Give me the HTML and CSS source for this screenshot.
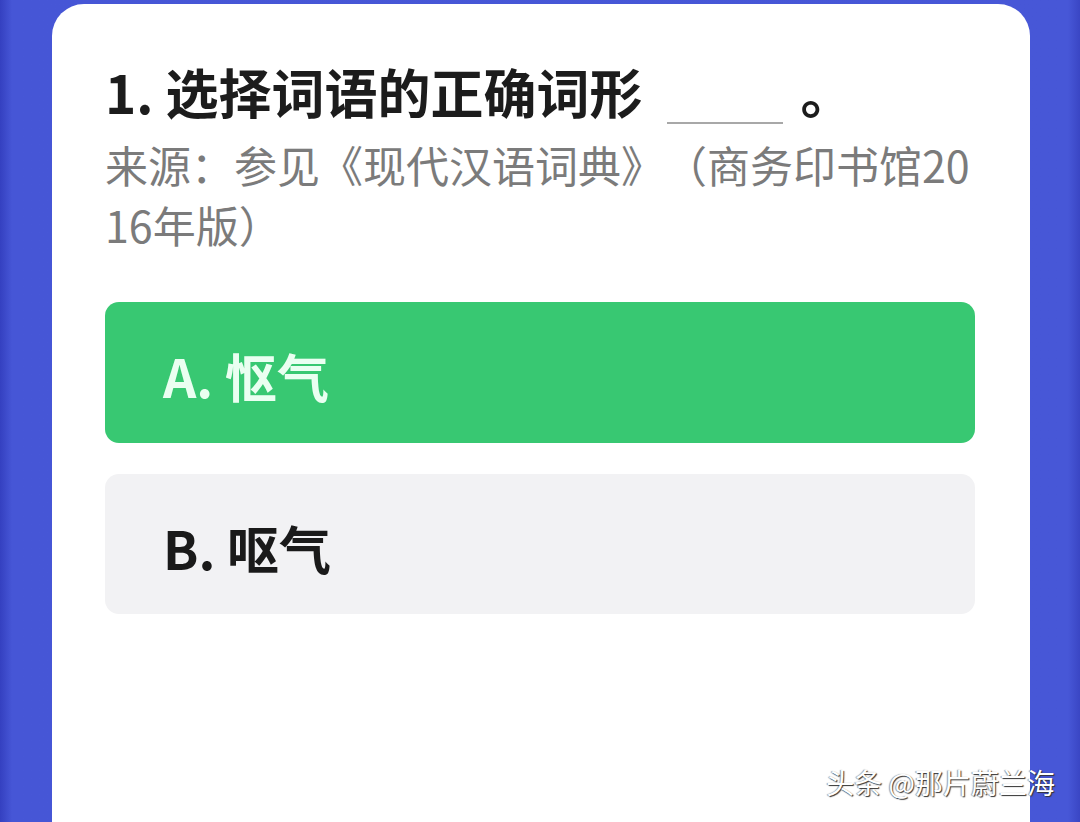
FILE: index.html
```html
<!DOCTYPE html>
<html lang="zh-CN">
<head>
<meta charset="utf-8">
<title>选择词语的正确词形</title>
<link rel="stylesheet" href="styles.css">
</head>
<body>
<div class="page">
  <div class="card">
    <h1 class="title">1. 选择词语的正确词形<span class="blank"></span>。</h1>
    <p class="source">来源：参见《现代汉语词典》（商务印书馆2016年版）</p>
    <div class="options">
      <div class="option option-correct">A. 怄气</div>
      <div class="option">B. 呕气</div>
    </div>
  </div>
  <div class="watermark">头条 @那片蔚兰海</div>
</div>
</body>
</html>
```

FILE: styles.css
```css
html, body {
  margin: 0;
  padding: 0;
}
body {
  width: 1080px;
  height: 822px;
  overflow: hidden;
  background: #4656d5;
  font-family: "Noto Sans CJK SC", "Noto Sans", sans-serif;
  text-spacing-trim: space-all;
}
.page {
  position: relative;
  width: 1080px;
  height: 822px;
  overflow: hidden;
  background: linear-gradient(90deg, #3440c0 0px, #4656d6 12px, #4757d7 1068px, #3a46c4 1080px);
}
.card {
  margin: 4px 0 0 52px;
  width: 978px;
  height: 900px;
  box-sizing: border-box;
  padding: 56px 55px 0 53px;
  background: #ffffff;
  border-radius: 32px 32px 0 0;
}
.title {
  margin: 0;
  font-size: 53px;
  line-height: 62px;
  font-weight: 700;
  color: #1c1c1c;
}
.blank {
  display: inline-block;
  width: 116px;
  height: 40px;
  margin: 0 18px 0 24px;
  border-bottom: 2px solid #a8a8a8;
  vertical-align: -10px;
}
.source {
  margin: 10px 0 0 0;
  font-size: 43px;
  line-height: 60px;
  color: #7b7b7b;
  word-break: break-all;
}
.options {
  margin-top: 48px;
  display: flex;
  flex-direction: column;
  gap: 31px;
}
.option {
  height: 140px;
  box-sizing: border-box;
  display: flex;
  align-items: center;
  padding: 6px 0 0 58px;
  border-radius: 14px;
  background: #f2f2f4;
  font-size: 52px;
  font-weight: 700;
  color: #1a1a1a;
}
.option-correct {
  height: 141px;
  background: #38c872;
  color: #eafff1;
}
.watermark {
  position: absolute;
  right: 25px;
  bottom: 22px;
  font-size: 28px;
  line-height: 36px;
  color: #ffffff;
  text-shadow: 1px 1px 1px #333, -1px 0 1px rgba(0,0,0,0.4);
}
```
